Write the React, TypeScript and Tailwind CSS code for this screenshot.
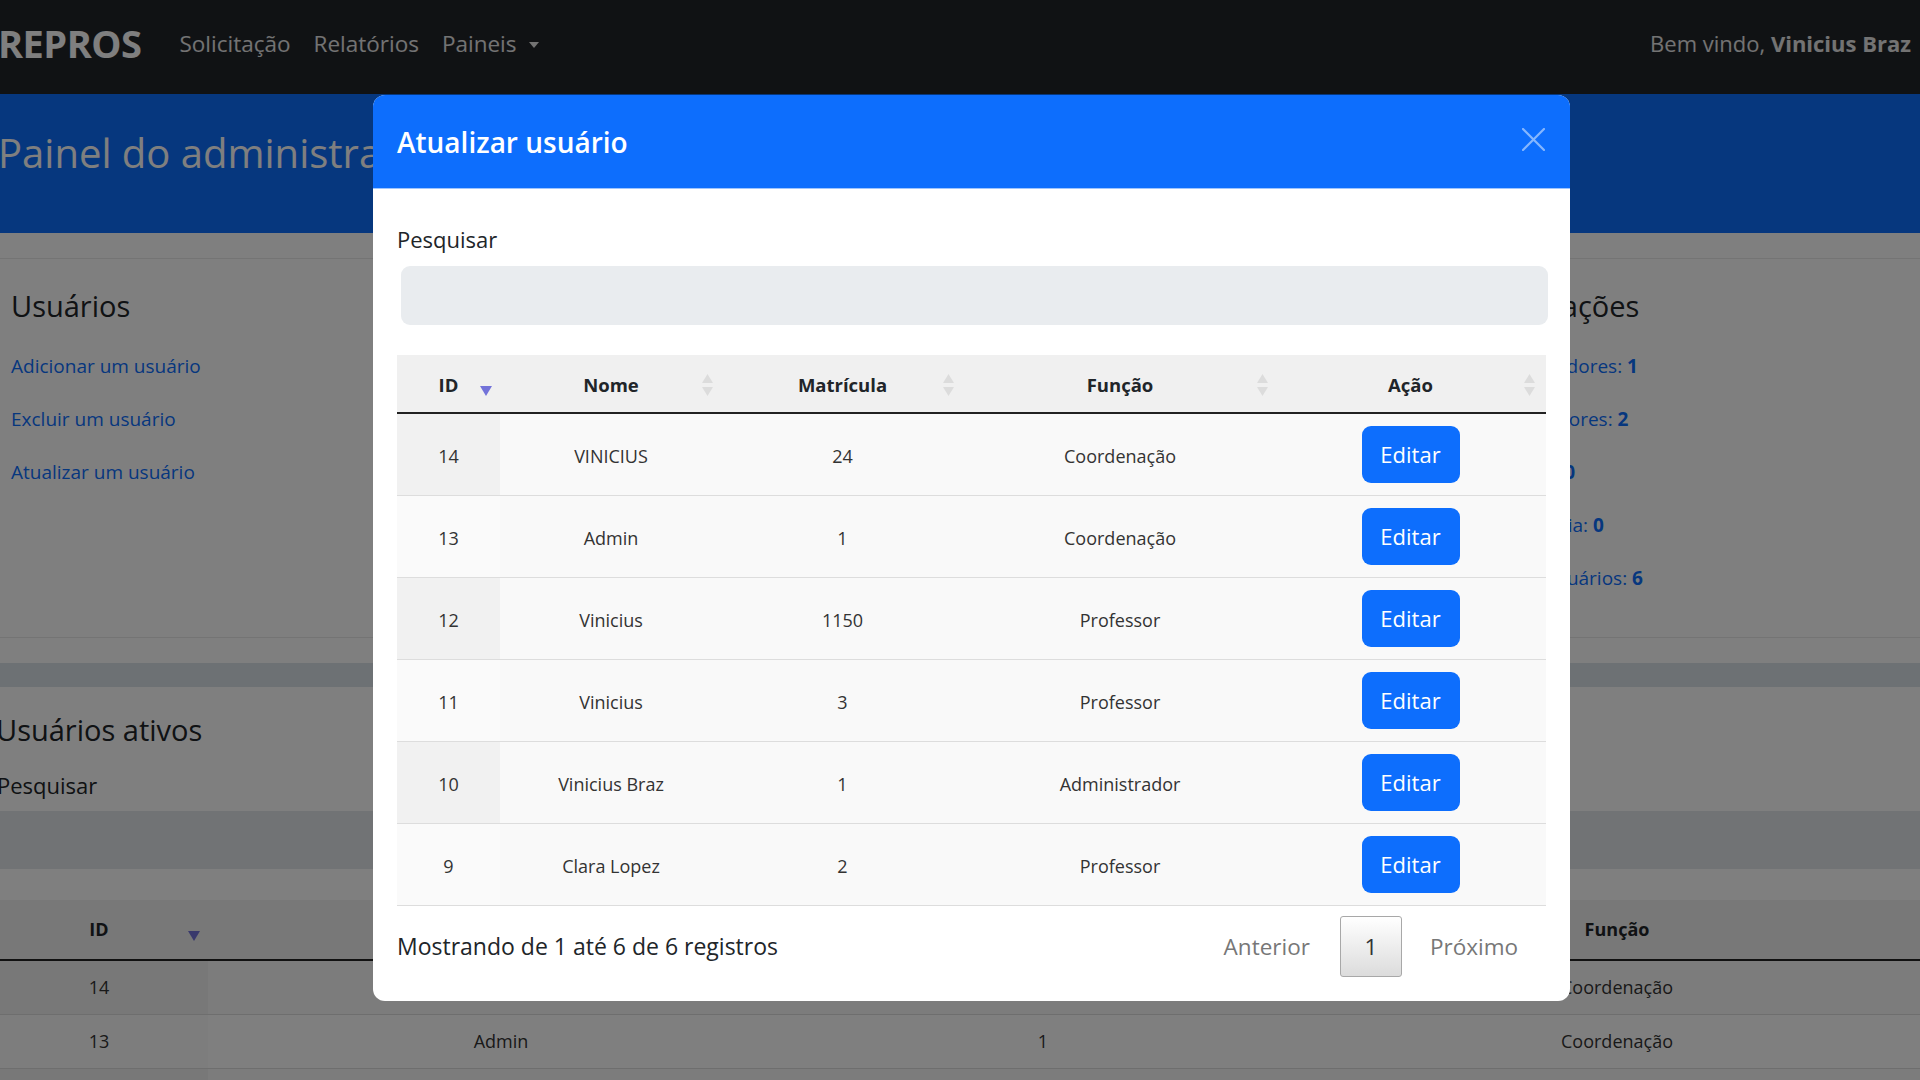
import React from 'react';

const users = [
  { id: 14, nome: 'VINICIUS', matricula: '24', funcao: 'Coordenação' },
  { id: 13, nome: 'Admin', matricula: '1', funcao: 'Coordenação' },
  { id: 12, nome: 'Vinicius', matricula: '1150', funcao: 'Professor' },
  { id: 11, nome: 'Vinicius', matricula: '3', funcao: 'Professor' },
  { id: 10, nome: 'Vinicius Braz', matricula: '1', funcao: 'Administrador' },
  { id: 9, nome: 'Clara Lopez', matricula: '2', funcao: 'Professor' },
];

const stats = [
  { label: 'Administradores', value: 1 },
  { label: 'Coordenadores', value: 2 },
  { label: 'Avaliados', value: 0 },
  { label: 'Em auditoria', value: 0 },
  { label: 'Total de usuários', value: 6 },
];

function SortBoth() {
  return (
    <svg width="11" height="22" viewBox="0 0 11 22" className="absolute right-[9px] top-1/2 -translate-y-1/2">
      <path d="M5.5 0 L11 9 L0 9 Z" fill="#dcdcdc" />
      <path d="M0 13 L11 13 L5.5 22 Z" fill="#dcdcdc" />
    </svg>
  );
}

function SortDesc() {
  return (
    <svg width="12" height="10" viewBox="0 0 12 10" className="absolute right-[8px] top-1/2 translate-y-[1px]">
      <path d="M0 0 L12 0 L6 10 Z" fill="#7373d9" />
    </svg>
  );
}

export default function App() {
  const cols = 'grid grid-cols-[103px_222px_241px_314px_267px]';

  return (
    <div className="relative h-[1080px] w-full overflow-hidden bg-white font-['Open_Sans',sans-serif] text-[#212529]">
      {/* navbar */}
      <nav className="flex h-[94px] items-center justify-between bg-[#212529] pb-[7px] pr-[9px]">
        <div className="flex items-center">
          <span className="-ml-[2px] text-[38px] font-bold tracking-[-0.5px] text-white">REPROS</span>
          <div className="ml-[38px] flex items-center gap-[23px] text-[22.5px] text-[#e6e6e6]">
            <span>Solicitação</span>
            <span>Relatórios</span>
            <span className="flex items-center gap-[12px]">
              Paineis
              <span className="mt-[3px] h-0 w-0 border-x-[5px] border-t-[6px] border-x-transparent border-t-[#e6e6e6]" />
            </span>
          </div>
        </div>
        <div className="text-[22px] text-[#e6e6e6]">
          Bem vindo, <span className="font-bold">Vinicius Braz</span>
        </div>
      </nav>

      {/* page title */}
      <header className="h-[139px] bg-[#0d6efd] pt-[33px]">
        <h1 className="-ml-[2px] text-[40px] leading-[52px] font-medium text-white">Painel do administrador</h1>
      </header>

      <div className="h-[25px]" />

      {/* cards */}
      <section className="grid h-[380px] grid-cols-[1470px_450px] border-y border-[#e8e8e8]">
        <div className="pl-[11px] pt-[29px]">
          <h3 className="text-[29px] leading-[36px]">Usuários</h3>
          <div className="mt-[28px] flex flex-col gap-[25px] text-[19px] leading-[28px] text-[#0d6efd]">
            <a>Adicionar um usuário</a>
            <a>Excluir um usuário</a>
            <a>Atualizar um usuário</a>
          </div>
        </div>
        <div className="pt-[29px]">
          <h3 className="text-[29px] leading-[36px]">Informações</h3>
          <div className="mt-[28px] flex flex-col gap-[25px] text-[19px] leading-[28px] text-[#0d6efd]">
            {stats.map((s) => (
              <span key={s.label}>
                {s.label}: <span className="font-bold">{s.value}</span>
              </span>
            ))}
          </div>
        </div>
      </section>

      <div className="h-[25px]" />
      <div className="h-[24px] bg-[#dbe2e8]" />

      {/* active users */}
      <section className="pt-[25px]">
        <h3 className="-ml-[4px] text-[29px] leading-[36px]">Usuários ativos</h3>
        <label className="-ml-[3px] mt-[21px] block text-[22px] leading-[32px]">Pesquisar</label>
        <div className="mt-[10px] h-[58px] w-full bg-[#e2e6ea]" />
        <div className="-ml-[10px] mt-[31px] w-[2000px] text-[18px]">
          <div className="grid h-[61px] grid-cols-[218px_586px_498px_650px_48px] items-center border-b-2 border-[#222] bg-[#f0f0f0] font-bold">
            <div className="relative flex h-full items-center justify-center">
              ID
              <SortDesc />
            </div>
            <div className="text-center">Nome</div>
            <div className="text-center">Matrícula</div>
            <div className="text-center">Função</div>
            <div />
          </div>
          {users.slice(0, 3).map((u, i) => (
            <div
              key={u.id}
              className={`grid h-[54px] grid-cols-[218px_586px_498px_650px_48px] items-center border-b border-[#ddd] text-[#333] ${i % 2 === 0 ? 'bg-[#f9f9f9]' : 'bg-white'}`}
            >
              <div className={`flex h-full items-center justify-center ${i % 2 === 0 ? 'bg-[#f1f1f1]' : 'bg-[#fafafa]'}`}>{u.id}</div>
              <div className="text-center">{u.nome}</div>
              <div className="text-center">{u.matricula}</div>
              <div className="text-center">{u.funcao}</div>
              <div />
            </div>
          ))}
        </div>
      </section>

      {/* backdrop */}
      <div className="fixed inset-0 bg-black/50" />

      {/* modal */}
      <div className="absolute left-[373px] top-[95px] w-[1197px] overflow-hidden rounded-[12px] bg-white">
        <div className="flex h-[94px] items-center justify-between border-b border-[#9ec5fe] bg-[#0d6efd] pl-[24px] pr-[25px]">
          <h5 className="text-[28px] font-semibold text-white">Atualizar usuário</h5>
          <svg width="23" height="23" viewBox="0 0 23 23" className="-mt-[4px]">
            <path d="M1 1 L22 22 M22 1 L1 22" stroke="#86b7fe" strokeWidth="2.2" strokeLinecap="round" />
          </svg>
        </div>

        <div className="px-[24px] pb-[24px] pt-[32px]">
          <label className="block text-[22px] leading-[36px] text-[#212529]">Pesquisar</label>
          <div className="ml-[4px] mt-[9px] h-[59px] w-[1147px] rounded-[9px] bg-[#e9ecef]" />

          <div className="mt-[30px]">
            <div className={`${cols} h-[59px] border-b-2 border-[#222] bg-[#f0f0f0] pt-[3px] text-[18.5px] font-bold`}>
              <div className="relative flex items-center justify-center">
                ID
                <SortDesc />
              </div>
              <div className="relative flex items-center justify-center">
                Nome
                <SortBoth />
              </div>
              <div className="relative flex items-center justify-center">
                Matrícula
                <SortBoth />
              </div>
              <div className="relative flex items-center justify-center">
                Função
                <SortBoth />
              </div>
              <div className="relative flex items-center justify-center">
                Ação
                <SortBoth />
              </div>
            </div>

            {users.map((u, i) => (
              <div key={u.id} className={`${cols} h-[82px] border-b border-[#ddd] bg-[#f9f9f9] text-[18px] text-[#333]`}>
                <div className={`flex items-center justify-center pt-[3px] ${i % 2 === 0 ? 'bg-[#f1f1f1]' : 'bg-[#fafafa]'}`}>{u.id}</div>
                <div className="flex items-center justify-center pt-[3px]">{u.nome}</div>
                <div className="flex items-center justify-center pt-[3px]">{u.matricula}</div>
                <div className="flex items-center justify-center pt-[3px]">{u.funcao}</div>
                <div className="flex items-center justify-center">
                  <button className="h-[57px] w-[98px] rounded-[9px] bg-[#0d6efd] text-[22px] text-white">Editar</button>
                </div>
              </div>
            ))}
          </div>

          <div className="mt-[10px] flex h-[61px] items-center justify-between">
            <span className="text-[23px]">Mostrando de 1 até 6 de 6 registros</span>
            <div className="flex h-full items-center text-[22.5px] text-[#777]">
              <span className="px-[28px]">Anterior</span>
              <span className="ml-[2px] flex h-[61px] w-[62px] items-center justify-center rounded-[3px] border border-[#a8a8a8] bg-gradient-to-b from-white to-[#dcdcdc] text-[#333]">
                1
              </span>
              <span className="px-[28px]">Próximo</span>
            </div>
          </div>
        </div>
      </div>
    </div>
  );
}
